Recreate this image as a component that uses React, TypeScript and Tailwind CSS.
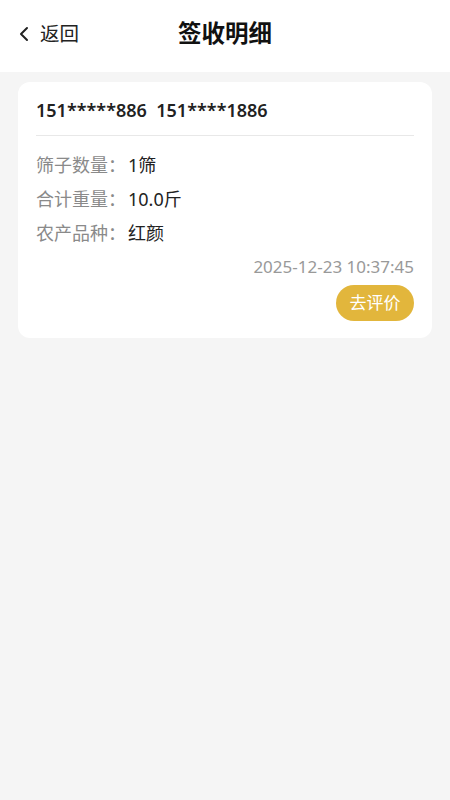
import { ChevronLeft } from "lucide-react";

const font = { fontFamily: '"Noto Sans", "Noto Sans CJK SC", sans-serif' };

const rows = [
  { label: "筛子数量：", value: "1筛" },
  { label: "合计重量：", value: "10.0斤" },
  { label: "农产品种：", value: "红颜" },
];

export default function App() {
  return (
    <div className="min-h-[800px] bg-[#f5f5f5]" style={font}>
      {/* Header */}
      <div className="relative flex h-[72px] items-center justify-center bg-white">
        <button className="absolute left-[12px] top-[21px] flex items-center gap-[4px] text-[#222]">
          <ChevronLeft className="h-[24px] w-[24px]" strokeWidth={2} />
          <span className="text-[19.5px] leading-[26px]">返回</span>
        </button>
        <h1 className="-mt-[5px] text-[23.5px] font-bold text-[#111]">签收明细</h1>
      </div>

      {/* Card */}
      <div className="mx-[18px] mt-[10px] rounded-[12px] bg-white px-[18px] pb-[17px] pt-[15px]">
        <p className="border-b border-[#e8e8e8] pb-[12px] text-[18px] font-semibold leading-[26px] text-[#222]">
          151*****886&nbsp;&nbsp;151****1886
        </p>
        <div className="mt-[16px] space-y-[8px]">
          {rows.map((r) => (
            <div key={r.label} className="flex text-[18px] leading-[26px]">
              <span className="w-[92px] text-[#8a8a8a]">{r.label}</span>
              <span className="text-[#222]">{r.value}</span>
            </div>
          ))}
        </div>
        <p className="mt-[10px] text-right text-[17px] leading-[22px] text-[#999]">2025-12-23 10:37:45</p>
        <div className="mt-[7px] flex justify-end">
          <button className="h-[36px] w-[78px] rounded-full bg-[#e2b63c] text-[17px] text-white">去评价</button>
        </div>
      </div>
    </div>
  );
}
